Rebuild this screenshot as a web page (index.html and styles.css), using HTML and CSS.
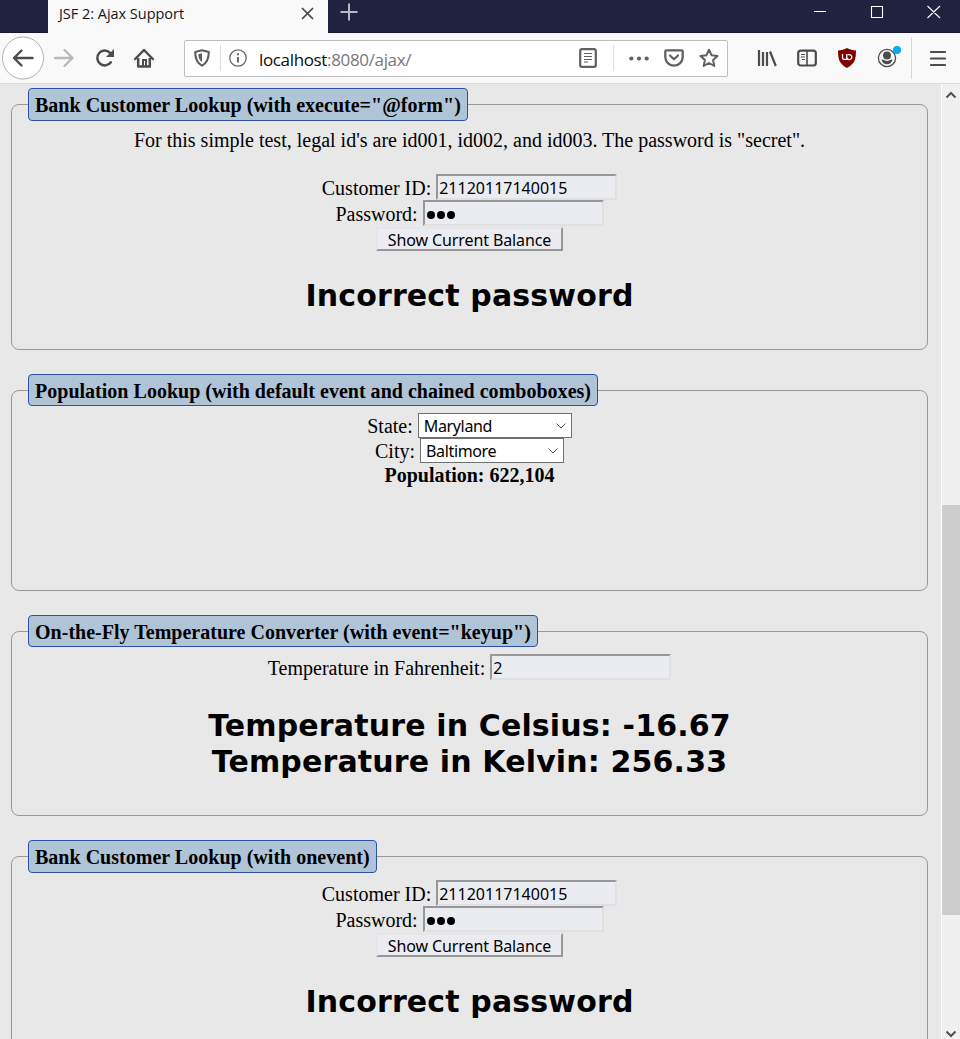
FILE: index.html
```
<!DOCTYPE html>
<html lang="en">
<head>
<meta charset="utf-8">
<title>JSF 2: Ajax Support</title>
<link rel="stylesheet" href="styles.css">
</head>
<body>
<div class="window">
  <header class="titlebar">
    <div class="tab"><span class="tab-title">JSF 2: Ajax Support</span>
      <svg width="13" height="13" viewBox="0 0 13 13"><path d="M1 1l11 11M12 1L1 12" stroke="#454545" stroke-width="1.7"/></svg>
    </div>
    <svg class="new-tab" width="18" height="18" viewBox="0 0 18 18"><path d="M9 .5v17M.5 9h17" stroke="#b9b9c3" stroke-width="2"/></svg>
    <svg class="controls" width="128" height="14" viewBox="0 0 128 14" fill="none" stroke="#fff" stroke-width="1.1"><path d="M0 6.500h12M57.500 1.500h11v11h-11zM113.500 1l12.500 12M126 1l-12.500 12"/></svg>
  </header>
  <nav class="toolbar">
    <svg class="back" width="42" height="44" viewBox="0 0 42 44" fill="none"><ellipse cx="21" cy="22" rx="20.500" ry="21" fill="#fff" stroke="#b1b1b3"/><path d="M30.500 22H12M19.500 14.500L12 22l7.500 7.500" stroke="#4c4c4f" stroke-width="2.400" stroke-linecap="round" stroke-linejoin="round"/></svg>
    <svg class="forward" width="20" height="20" viewBox="0 0 20 20" fill="none"><path d="M1 10h17M10.500 2l8 8-8 8" stroke="#b8b8b9" stroke-width="2.300" stroke-linecap="round" stroke-linejoin="round"/></svg>
    <svg class="reload" width="20" height="20" viewBox="0 0 20 20" fill="none"><path d="M15.800 14.200A7.400 7.400 0 1 1 15 4.800L17 7" stroke="#4c4c4f" stroke-width="2.500" stroke-linecap="round"/><path d="M19 1v8h-8z" fill="#4c4c4f"/></svg>
    <svg class="home" width="20" height="20" viewBox="0 0 20 20" fill="none" stroke="#4c4c4f"><path d="M1.200 11L10 2l8.800 9" stroke-width="2.500" stroke-linecap="round" stroke-linejoin="round"/><path d="M4.200 10v8.500h11.600V10" stroke-width="2.500" stroke-linejoin="round"/><path d="M9 18v-6h3v6" stroke-width="2"/></svg>
    <div class="urlbar">
      <svg class="shield" width="16" height="18" viewBox="0 0 16 18"><path d="M8 1.200L14.800 3C14.800 10 13 14 8 16.700 3 14 1.200 10 1.200 3z" fill="none" stroke="#5c5c5e" stroke-width="2.100" stroke-linejoin="round"/><path d="M8 4.300v8.800C5.500 11.500 4.500 9 4.300 5.200z" fill="#5c5c5e"/></svg>
      <i class="url-rule"></i>
      <svg class="info" width="18" height="18" viewBox="0 0 18 18" fill="none" stroke="#69696b"><circle cx="9" cy="9" r="8.200" stroke-width="1.300"/><path d="M9 8v5.500M9 4.200v2" stroke-width="2"/></svg>
      <span class="url">localhost<span class="url-dim">:8080/ajax/</span></span>
      <svg class="reader" width="18" height="20" viewBox="0 0 18 20" fill="none" stroke="#606062"><rect x="1.200" y="1.200" width="15.600" height="17.600" rx="1.800" stroke-width="2.200"/><path d="M5 5.500h8M5 8.500h8M5 11.500h8M5 14h4" stroke-width="1.200"/></svg>
      <i class="url-rule2"></i>
      <svg class="dots" width="20" height="5" viewBox="0 0 20 5" fill="#606062"><circle cx="2.300" cy="2.500" r="2.100"/><circle cx="10" cy="2.500" r="2.100"/><circle cx="17.700" cy="2.500" r="2.100"/></svg>
      <svg class="pocket" width="20" height="18" viewBox="0 0 20 18" fill="none" stroke="#606062" stroke-linecap="round" stroke-linejoin="round"><path d="M2.500 1.300h15q1.200 0 1.200 1.200V8A8.700 8.700 0 0 1 1.300 8V2.500q0-1.200 1.200-1.200z" stroke-width="2.300"/><path d="M6 6.500l4 3.800 4-3.800" stroke-width="2.200"/></svg>
      <svg class="star" width="20" height="20" viewBox="0 0 20 20"><path d="M10 1.700l2.500 5.500 6 .7-4.400 4.100 1.200 6L10 15l-5.300 3 1.200-6L1.500 7.900l6-.7z" fill="none" stroke="#606062" stroke-width="2" stroke-linejoin="round"/></svg>
    </div>
    <svg class="library" width="20" height="18" viewBox="0 0 20 18"><path d="M2 1v16M6 3v14M10 3v14M13 2.500L18.800 17" stroke="#4c4c4f" stroke-width="2.200" fill="none"/></svg>
    <svg class="sidebar" width="20" height="18" viewBox="0 0 20 18" fill="none" stroke="#4c4c4f"><rect x="1.200" y="1.700" width="17.600" height="14.800" rx="2.500" stroke-width="2.200"/><path d="M10 2v14" stroke-width="1.600"/><path d="M4 5.500h4M4 8h4M5 10.500h3" stroke-width="1.200"/></svg>
    <svg class="ublock" width="18" height="20" viewBox="0 0 18 20"><path d="M9 0c3 1.800 5.500 2.300 9 2.500 0 9-1.500 13.500-9 17.500C1.500 16 0 11.500 0 2.500 3.500 2.300 6 1.800 9 0z" fill="#800000"/><path d="M4.500 6v3.700q0 1.700 1.700 1.700h2.600V6M8.800 9a2.500 2.500 0 1 0 2.500-2.400H9.800" fill="none" stroke="#fff" stroke-width="1.300"/></svg>
    <svg class="account" width="24" height="24" viewBox="0 0 24 24"><circle cx="10" cy="13" r="8.600" fill="none" stroke="#4c4c4f" stroke-width="1.300"/><circle cx="10" cy="10.500" r="4" fill="#4c4c4f"/><path d="M4.500 14.800q1.500-.8 2.500.3 3 2 6 0 1-1.100 2.500-.3-1.500 4.500-5.500 4.500t-5.500-4.500z" fill="#4c4c4f"/><circle cx="20" cy="5" r="4" fill="#00adf5"/></svg>
    <i class="menu-rule"></i>
    <svg class="menu" width="16" height="17" viewBox="0 0 16 17"><path d="M1 2h14M1 8.500h14M1 15h14" stroke="#4c4c4f" stroke-width="2.200" stroke-linecap="round"/></svg>
  </nav>
  <div class="viewport">
    <main class="page">
      <fieldset class="card lookup">
        <legend>Bank Customer Lookup (with execute="@form")</legend>
        <p class="hint">For this simple test, legal id's are id001, id002, and id003. The password is "secret".</p>
        <div class="field">Customer ID: <span class="input">21120117140015</span></div>
        <div class="field">Password: <span class="input"><b class="secret"><i></i><i></i><i></i></b></span></div>
        <div class="action"><span class="button">Show Current Balance</span></div>
        <h2>Incorrect password</h2>
      </fieldset>
      <fieldset class="card population">
        <legend>Population Lookup (with default event and chained comboboxes)</legend>
        <div class="choice">State: <span class="select state">Maryland<svg width="12" height="8" viewBox="0 0 12 8"><path d="M1.500 1.500L6 6l4.500-4.500" fill="none" stroke="#555"/></svg></span></div>
        <div class="choice">City: <span class="select city">Baltimore<svg width="12" height="8" viewBox="0 0 12 8"><path d="M1.500 1.500L6 6l4.500-4.500" fill="none" stroke="#555"/></svg></span></div>
        <div class="result">Population: 622,104</div>
      </fieldset>
      <fieldset class="card temperature">
        <legend>On-the-Fly Temperature Converter (with event="keyup")</legend>
        <div class="field">Temperature in Fahrenheit: <span class="input">2</span></div>
        <h2>Temperature in Celsius: -16.67<br>Temperature in Kelvin: 256.33</h2>
      </fieldset>
      <fieldset class="card event">
        <legend>Bank Customer Lookup (with onevent)</legend>
        <div class="field">Customer ID: <span class="input">21120117140015</span></div>
        <div class="field">Password: <span class="input"><b class="secret"><i></i><i></i><i></i></b></span></div>
        <div class="action"><span class="button">Show Current Balance</span></div>
        <h2>Incorrect password</h2>
      </fieldset>
    </main>
    <aside class="scrollbar">
      <svg width="12" height="8" viewBox="0 0 12 8"><path d="M1.500 6.500L6 2l4.500 4.500" fill="none" stroke="#505050" stroke-width="2"/></svg>
      <div class="thumb"></div>
      <svg class="down" width="12" height="8" viewBox="0 0 12 8"><path d="M1.500 1.500L6 6l4.500-4.500" fill="none" stroke="#505050" stroke-width="2"/></svg>
    </aside>
  </div>
</div>
</body>
</html>
```
FILE: styles.css
```
* { box-sizing: border-box; }
body { margin: 0; }
.window { width: 960px; height: 1039px; overflow: hidden; display: flex; flex-direction: column; background: #e8e8e8; }
svg { display: block; flex: none; }
.titlebar { height: 33px; flex: none; background: #20223f; display: flex; padding-left: 48px; border-bottom: 1px solid #17182e; }
.tab { width: 280px; height: 33px; background: #f9f9fa; display: flex; justify-content: space-between; padding: 7px 14px 0 11px; font: 14.5px/14px "Open Sans", sans-serif; color: #15151a; }
.tab-title { white-space: nowrap; letter-spacing: -.03px; }
.new-tab { margin: 3px 0 0 12px; }
.controls { margin: 5px 18px 0 auto; }
.toolbar { height: 51px; flex: none; display: flex; align-items: center; background: #f9f9fa; border-bottom: 1px solid #dcdcdd; padding-left: 2px; }
.forward { margin-left: 10px; }
.reload { margin-left: 21px; }
.home { margin-left: 19px; }
.urlbar { width: 544px; height: 37px; margin-left: 30px; border: 1px solid #bdbdbf; border-radius: 2px; background: #fff; display: flex; align-items: center; flex: none; }
.shield { margin-left: 9px; }
.url-rule, .url-rule2 { width: 1px; height: 26px; background: #dcdcdd; }
.url-rule { margin-left: 10px; }
.info { margin-left: 8px; }
.url { margin-left: 12px; padding-top: 3px; width: 320px; font: 17px/24px "Open Sans", sans-serif; letter-spacing: -.35px; color: #0c0c0d; }
.url-dim { color: #77777a; }
.url-rule2 { margin-left: 16px; }
.dots { margin-left: 15px; }
.pocket { margin-left: 15px; }
.star { margin-left: 15px; }
.library { margin-left: 29px; }
.sidebar { margin-left: 20px; }
.ublock { margin-left: 21px; }
.account { margin: -3px 0 0 21px; }
.menu-rule { width: 1px; height: 42px; margin-left: 10px; background: #d7d7db; }
.menu { margin-left: 18px; }
.viewport { display: flex; height: 955px; overflow: hidden; }
.page { width: 941px; padding: 4px 13px 0 11px; overflow: hidden; color: #000; font: 20px/24px "Liberation Serif", serif; text-align: center; }
.card { margin: 0 0 24px; padding: 0 16px; border: 1px solid #999; border-radius: 8px; min-width: 0; }
.lookup { height: 262px; }
.population { height: 217px; }
.temperature { height: 201px; }
.event { height: 262px; }
legend { height: 32px; padding: 0 6px; border: 1px solid #2a52a5; border-radius: 4px; background: #b0c4d8; font-weight: bold; line-height: 32px; letter-spacing: .015px; white-space: nowrap; text-align: left; }
.lookup legend, .event legend { height: 33px; }
.lookup legend { margin-bottom: -1px; }
.hint { margin: 8px 0 22px; line-height: 24px; white-space: nowrap; }
.field { height: 26px; line-height: 28px; display: flex; justify-content: center; gap: 5px; white-space: nowrap; }
.population .choice:first-of-type { margin-top: 7px; }
.temperature .field { margin-top: 7px; line-height: 29px; }
.event legend + .field { margin-top: 7px; }
.input { width: 181px; height: 26px; border: 2px solid; border-color: #979797 #e0e0e2 #e0e0e2 #979797; background: #ebecf2; padding: 0 1px; text-align: left; font: 16px/24px "Noto Sans", sans-serif; }
.secret { display: flex; gap: 2px; padding: 9px 0 0 1px; }
.secret i { width: 8px; height: 8px; border-radius: 50%; background: #000; }
.action { height: 25px; padding-top: 1px; display: flex; justify-content: center; }
.button { width: 187px; height: 24px; border: 2px solid; border-color: #e6e6ea #979797 #979797 #e6e6ea; background: #ebecf2; font: 16px/22px "Noto Sans", sans-serif; letter-spacing: -.1px; white-space: nowrap; }
h2 { margin: 27px 0 0; font: bold 30px/36px "DejaVu Sans", sans-serif; letter-spacing: .15px; white-space: nowrap; }
.temperature h2 { margin-top: 28px; }
.choice { height: 25px; line-height: 27px; display: flex; justify-content: center; gap: 5px; }
.choice + .choice { line-height: 26px; }
.select { height: 25px; border: 1px solid #707070; background: #fff; display: flex; justify-content: space-between; align-items: center; padding: 1px 4px 0 5px; font: 16px/22px "Noto Sans", sans-serif; letter-spacing: -.35px; }
.state { width: 154px; }
.city { width: 144px; }
.result { font-weight: bold; line-height: 25px; }
.scrollbar { width: 19px; border-left: 1px solid #fff; background: #f0f0f0; display: flex; flex-direction: column; align-items: center; padding: 7px 0 0; }
.thumb { width: 18px; height: 410px; margin-top: 406px; background: #cdcdcd; flex: none; }
.down { margin-top: 115px; }
```
